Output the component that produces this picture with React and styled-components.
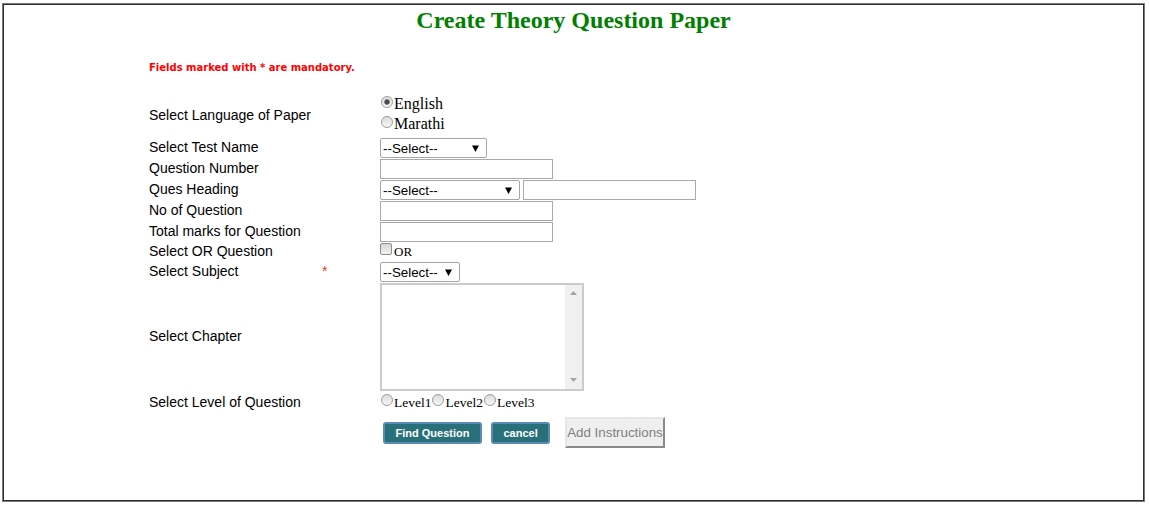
import React from "react";
import styled, { createGlobalStyle } from "styled-components";

const GlobalStyle = createGlobalStyle`
    body {
        margin: 0;
        background: #ffffff;
    }
`;

const Frame = styled.div`
    width: 1143px;
    height: 499px;
    margin: 3px 0 0 2px;
    box-sizing: border-box;
    border: 1px solid #7a7a7a;
    box-shadow: inset 0 0 0 1px #2e2e2e;
    padding: 1px;
    font-family: "Liberation Sans", Arial, sans-serif;
`;

const Title = styled.h2`
    margin: 1px 0 0;
    text-align: center;
    font-family: "Liberation Serif", "Times New Roman", serif;
    font-size: 24px;
    line-height: 28px;
    font-weight: bold;
    color: #008000;
`;

const Note = styled.p`
    margin: 28px 0 0 145px;
    font-family: "DejaVu Sans", Verdana, sans-serif;
    font-size: 10px;
    line-height: 12px;
    font-weight: bold;
    color: #ff0000;
`;

const Form = styled.form`
    display: grid;
    grid-template-columns: 173px 58px auto;
    row-gap: 1px;
    align-items: center;
    margin: 20px 0 0 145px;
`;

const Label = styled.span`
    font-size: 14px;
    line-height: 16px;
    padding-bottom: 2px;
    color: #000;
`;

const Star = styled.span`
    font-size: 14px;
    line-height: 16px;
    padding-bottom: 2px;
    color: #e8392b;
`;

const Field = styled.div`
    display: flex;
    align-items: center;
    gap: ${(p) => p.$gap || 0}px;
`;

const RadioStack = styled.div`
    display: flex;
    flex-direction: column;
    padding-bottom: 3px;
`;

const Choice = styled.label`
    display: inline-block;
    font-family: "Liberation Serif", "Times New Roman", serif;
    font-size: ${(p) => p.$size || 16}px;
    line-height: ${(p) => p.$line || 20}px;
    color: #000;
    white-space: nowrap;
`;

const Radio = styled.input.attrs({ type: "radio" })`
    appearance: none;
    width: 12px;
    height: 12px;
    margin: 0 1px 1px 1px;
    box-sizing: border-box;
    border: 1px solid #9c9c9c;
    border-radius: 50%;
    vertical-align: baseline;
    background: linear-gradient(#dcdcdc, #f7f7f7);
    &:checked {
        background: radial-gradient(circle, #4a4a4a 0 2px, #8c8c8c 2.6px, transparent 3.2px),
            linear-gradient(#dcdcdc, #f7f7f7);
    }
`;

const Check = styled.input.attrs({ type: "checkbox" })`
    appearance: none;
    width: 12px;
    height: 12px;
    margin: 0 2px 1px 0;
    box-sizing: border-box;
    border: 1px solid #8e8e8e;
    border-radius: 2px;
    vertical-align: baseline;
    background: linear-gradient(#d6d6d6, #f2f2f2);
`;

const SelectBox = styled.span`
    display: inline-flex;
    align-items: center;
    width: ${(p) => p.$width}px;
    height: 20px;
    box-sizing: border-box;
    border: 1px solid #a6a6a6;
    border-radius: 2px;
    background: #fff;
`;

const SelectInput = styled.select`
    appearance: none;
    flex: 1;
    min-width: 0;
    height: 100%;
    border: 0;
    margin: 0;
    padding: 0 0 0 2px;
    background: transparent;
    font-family: "Liberation Sans", Arial, sans-serif;
    font-size: 13.33px;
    color: #000;
    outline: none;
`;

const Caret = styled.svg`
    flex: none;
    margin-right: 7px;
`;

const TextInput = styled.input.attrs({ type: "text" })`
    width: 173px;
    height: 20px;
    margin: 0;
    padding: 0 2px;
    box-sizing: border-box;
    border: 1px solid #a9a9a9;
    font-family: "Liberation Sans", Arial, sans-serif;
    font-size: 13.33px;
`;

const ListBox = styled.div`
    display: flex;
    width: 204px;
    height: 108px;
    box-sizing: border-box;
    border: 2px solid #cbcbcb;
    background: #fff;
`;

const ListBody = styled.div`
    flex: 1;
`;

const ScrollTrack = styled.div`
    width: 17px;
    display: flex;
    flex-direction: column;
    justify-content: space-between;
    align-items: center;
    padding: 6px 0 7px;
    background: #f0f0f0;
`;

const ButtonBar = styled.div`
    display: flex;
    align-items: center;
    gap: 9px;
    padding: 2px 0 0 3px;
`;

const ActionButton = styled.button`
    height: 22px;
    padding: 0 10.5px;
    box-sizing: border-box;
    border: 2px solid #5b8bb2;
    border-radius: 3px;
    background: #29717a;
    color: #ffffff;
    font-family: "Liberation Sans", Arial, sans-serif;
    font-size: 11px;
    font-weight: bold;
    cursor: pointer;
`;

const PlainButton = styled.button`
    height: 31px;
    margin-left: 6px;
    padding: 0;
    box-sizing: border-box;
    border: 2px solid;
    border-color: #e6e6e6 #8a8a8a #8a8a8a #e6e6e6;
    background: #efefef;
    color: #808080;
    font-family: "Liberation Sans", Arial, sans-serif;
    font-size: 13.33px;
`;

function Select({ width }) {
    return (
        <SelectBox $width={width}>
            <SelectInput>
                <option>--Select--</option>
            </SelectInput>
            <Caret width="7" height="7" viewBox="0 0 7 7">
                <polygon points="0,0.5 7,0.5 3.5,7" fill="#000" />
            </Caret>
        </SelectBox>
    );
}

function Arrow({ up }) {
    return (
        <svg width="7" height="4" viewBox="0 0 7 4">
            <polygon points={up ? "0,4 7,4 3.5,0" : "0,0 7,0 3.5,4"} fill="#a3a3a3" />
        </svg>
    );
}

export default function App() {
    return (
        <>
            <GlobalStyle />
            <Frame>
                <Title>Create Theory Question Paper</Title>
                <Note>Fields marked with * are mandatory.</Note>
                <Form onSubmit={(e) => e.preventDefault()}>
                    <Label>Select Language of Paper</Label>
                    <span />
                    <RadioStack>
                        <Choice><Radio name="lang" defaultChecked />English</Choice>
                        <Choice><Radio name="lang" />Marathi</Choice>
                    </RadioStack>

                    <Label>Select Test Name</Label>
                    <span />
                    <Field><Select width={107} /></Field>

                    <Label>Question Number</Label>
                    <span />
                    <Field><TextInput /></Field>

                    <Label>Ques Heading</Label>
                    <span />
                    <Field $gap={3}>
                        <Select width={140} />
                        <TextInput />
                    </Field>

                    <Label>No of Question</Label>
                    <span />
                    <Field><TextInput /></Field>

                    <Label>Total marks for Question</Label>
                    <span />
                    <Field><TextInput /></Field>

                    <Label>Select OR Question</Label>
                    <span />
                    <Field>
                        <Choice $size={13} $line={18}><Check />OR</Choice>
                    </Field>

                    <Label>Select Subject</Label>
                    <Star>*</Star>
                    <Field><Select width={80} /></Field>

                    <Label>Select Chapter</Label>
                    <span />
                    <Field>
                        <ListBox>
                            <ListBody />
                            <ScrollTrack>
                                <Arrow up />
                                <Arrow />
                            </ScrollTrack>
                        </ListBox>
                    </Field>

                    <Label>Select Level of Question</Label>
                    <span />
                    <Field>
                        <Choice $size={13.5} $line={22}><Radio name="level" />Level1</Choice>
                        <Choice $size={13.5} $line={22}><Radio name="level" />Level2</Choice>
                        <Choice $size={13.5} $line={22}><Radio name="level" />Level3</Choice>
                    </Field>

                    <span />
                    <span />
                    <ButtonBar>
                        <ActionButton type="button">Find Question</ActionButton>
                        <ActionButton type="button">cancel</ActionButton>
                        <PlainButton type="button">Add Instructions</PlainButton>
                    </ButtonBar>
                </Form>
            </Frame>
        </>
    );
}
